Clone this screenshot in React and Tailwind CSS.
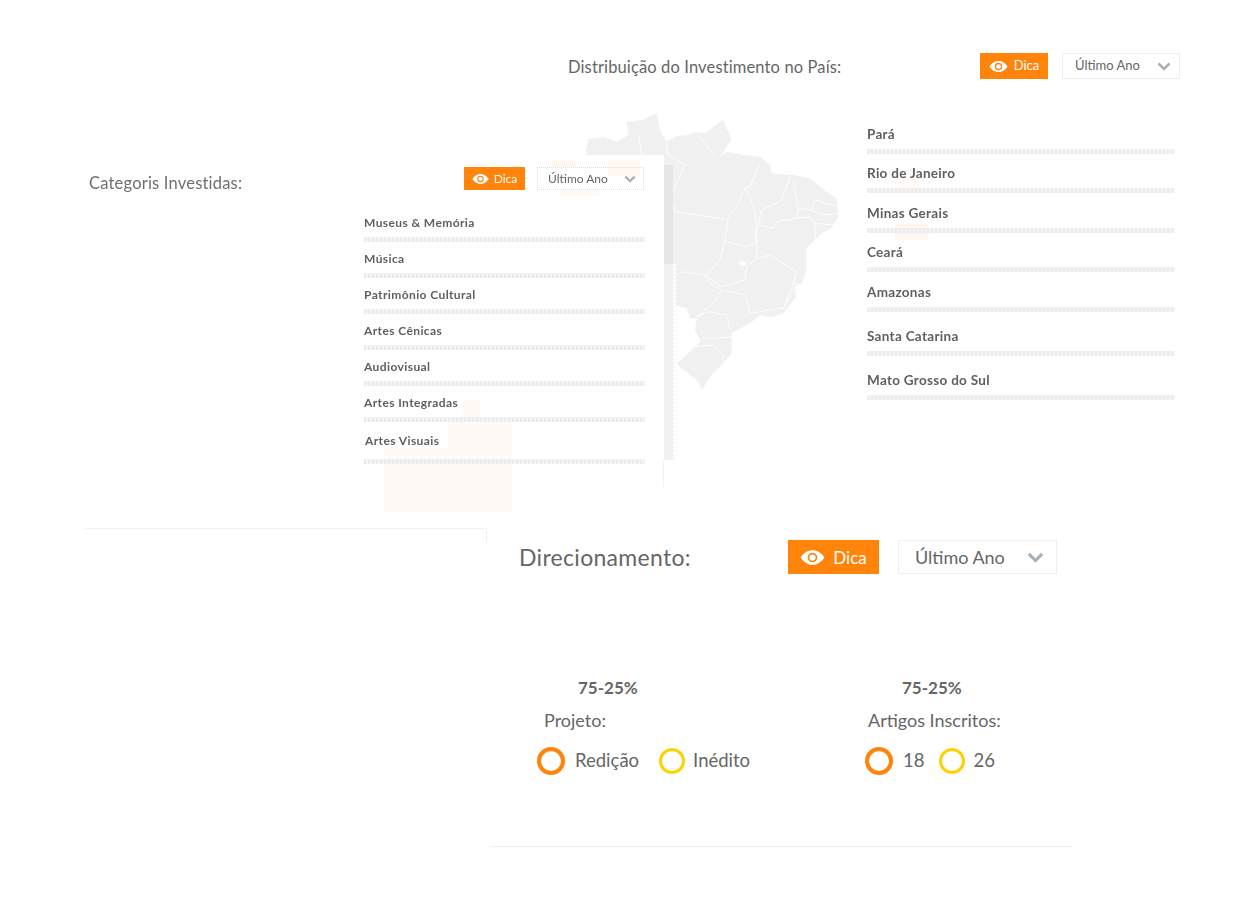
import React from 'react';

const STATES = [
  { name: 'Pará', mt: 'mt-[46px]' },
  { name: 'Rio de Janeiro', mt: 'mt-[10px]' },
  { name: 'Minas Gerais', mt: 'mt-[11px]' },
  { name: 'Ceará', mt: 'mt-[10px]' },
  { name: 'Amazonas', mt: 'mt-[11px]' },
  { name: 'Santa Catarina', mt: 'mt-[15px]' },
  { name: 'Mato Grosso do Sul', mt: 'mt-[15px]' },
];

const CATEGORIES = [
  { name: 'Museus & Memória', gap: 'mb-[8px]' },
  { name: 'Música', gap: 'mb-[8px]' },
  { name: 'Patrimônio Cultural', gap: 'mb-[8px]' },
  { name: 'Artes Cênicas', gap: 'mb-[8px]' },
  { name: 'Audiovisual', gap: 'mb-[8px]' },
  { name: 'Artes Integradas', gap: 'mb-[10px]' },
  { name: 'Artes Visuais', gap: 'mb-0', last: true },
];

const Eye = ({ className }) => (
  <svg viewBox="0 0 24 16" className={className}>
    <path d="M0.500 8C4 3 7.500 1 12 1s8 2 11.500 7C20 13 16.500 15 12 15S4 13 0.500 8z" fill="#fff" />
    <circle cx="12" cy="8" r="4.600" fill="#ff8409" />
    <circle cx="12" cy="8" r="3" fill="#fff" />
  </svg>
);

const Chevron = ({ className }) => (
  <svg viewBox="0 0 14 9" className={className} fill="none">
    <path d="M1.500 1.500 7 7l5.500-5.500" stroke="#a8b0b6" strokeWidth="2.600" />
  </svg>
);

const Bar = ({ className }) => (
  <div className={`h-[5px] bg-[repeating-linear-gradient(90deg,#ebebeb_0_2px,#f4f4f4_2px_4px)] ${className}`} />
);

const BrazilMap = () => (
  <svg viewBox="0 0 810 900" className="w-[270px] h-[300px] -mt-[12px] -ml-[5px] block">
    <defs>
      <pattern id="dots" width="6" height="6" patternUnits="userSpaceOnUse">
        <rect width="6" height="6" fill="#f3f3f3" />
        <rect width="3" height="3" fill="#eeeeee" />
        <rect x="3" y="3" width="3" height="3" fill="#eeeeee" />
      </pattern>
    </defs>
    <path
      fill="url(#dots)"
      d="M18 150 25 118 70 112 110 125 145 105 140 65 185 60 230 40 240 90 258 125 290 108 325 105 345 95 375 100 428 60 455 118 420 170 440 155 490 165 540 170 570 195 575 220 640 225 690 235 740 275 770 295 775 350 755 385 725 400 705 420 680 445 680 510 665 550 645 560 648 590 610 640 575 652 540 645 510 670 455 700 455 760 430 790 395 825 365 870 355 845 290 792 345 740 362 725 345 690 350 655 330 655 320 625 280 615 285 520 100 500 100 200 18 165Z"
    />
    <g fill="none" stroke="#fff" strokeWidth="2.500">
      <path d="M175 105 185 165" />
      <path d="M345 95 375 130 405 170" />
      <path d="M258 125 265 165 315 195 270 290 285 335 440 358" />
      <path d="M540 190 510 260 495 265 470 320 445 350 435 420 420 480 375 530 385 545 425 570" />
      <path d="M495 265 510 290 525 340 530 375 525 430 495 440 435 425" />
      <path d="M630 230 605 300 545 330 535 375 580 385 590 365 650 355 655 330 640 240" />
      <path d="M655 325 695 330 705 300 770 318" />
      <path d="M695 330 730 345 775 340" />
      <path d="M650 355 690 350 705 370 760 375" />
      <path d="M705 370 705 420" />
      <path d="M530 375 530 475 570 465 650 515 640 550 665 555" />
      <path d="M530 475 500 500 495 540 425 560 375 525" />
      <path d="M375 525 335 520 310 515 285 525" />
      <path d="M425 570 470 580 495 585 510 640 570 630 610 625 645 560" />
      <path d="M425 570 400 610 350 650 385 635 440 645 450 690" />
      <path d="M640 550 610 625" />
      <path d="M362 715 410 715 455 710" />
      <path d="M345 740 400 735 430 765 430 790" />
    </g>
    <rect x="478" y="485" width="20" height="12" fill="#fff" />
  </svg>
);

const Legend = ({ title, left, right, rightGap, labelClass }) => (
  <div>
    <div className={`text-[17px] font-bold text-[#666] leading-[24px] ${labelClass.pct}`}>75-25%</div>
    <div className={`mt-[8px] text-[18px] text-[#666] leading-[24px] ${labelClass.title}`}>{title}</div>
    <div className="mt-[15px] flex items-center">
      <span className="w-[28px] h-[28px] rounded-full border-[4px] border-[#ff8409]" />
      <span className={`text-[18.500px] text-[#666] ${labelClass.left}`}>{left}</span>
      <span className={`w-[26px] h-[26px] rounded-full border-[3px] border-[#ffd105] ${rightGap}`} />
      <span className="ml-[8px] text-[18.500px] text-[#666]">{right}</span>
    </div>
  </div>
);

export default function App() {
  return (
    <div className="relative w-[1234px] h-[900px] bg-white overflow-hidden font-['Lato',sans-serif] text-[#666]">
      {/* Distribuição */}
      <section className="relative h-[528px] pt-[53px] pl-[568px]">
        <div className="absolute left-[900px] top-[178px] w-[19px] h-[12px] bg-[#fffaf5]" />
        <div className="absolute left-[895px] top-[224px] w-[33px] h-[16px] bg-[#fff8f0]" />
        <div className="flex items-center h-[26px] w-[612px]">
          <h2 className="pt-[3px] text-[16.500px] tracking-[0.13px]">Distribuição do Investimento no País:</h2>
          <div className="ml-auto flex gap-[14px]">
            <button className="w-[68px] h-[26px] bg-[#ff8409] text-white text-[13px] flex items-center justify-center gap-[6px]">
              <Eye className="w-[19px] h-[13px]" />
              Dica
            </button>
            <button className="w-[118px] h-[26px] border border-[#eeeeee] text-[13px] flex items-center justify-between pl-[12px] pr-[8px]">
              Último Ano
              <Chevron className="w-[14px] h-[9px]" />
            </button>
          </div>
        </div>
        <div className="flex">
          <div className="w-[299px] pt-[33px] pl-[17px]">
            <BrazilMap />
          </div>
          <ul className="relative w-[308px] blur-[0.3px]">
            {STATES.map(s => (
              <li key={s.name} className={s.mt}>
                <div className="text-[13.500px] tracking-[0.3px] font-bold leading-[18px] text-[#5f5f5f]">{s.name}</div>
                <Bar className="mt-[6px]" />
              </li>
            ))}
          </ul>
        </div>
      </section>

      {/* Categorias, painel sobre o mapa */}
      <section className="absolute left-[80px] top-[155px] w-[584px] h-[305px] bg-white">
        <div className="absolute -right-[9px] top-[10px] w-[9px] h-[99px] bg-[#e6e6e6]" />
        <div className="absolute -right-[9px] top-[109px] w-[9px] h-[196px] bg-[#f1f1f1]" />
        <div className="absolute -right-[12px] top-[109px] w-[3px] h-[196px] bg-[repeating-linear-gradient(0deg,#f8f8f8_0_2px,#ffffff_2px_4px)]" />
        <div className="absolute right-0 top-[305px] h-[27px] border-r border-[#f1f1f1]" />
        <div className="absolute left-[472px] top-[5px] w-[24px] h-[7px] bg-[#fff8f0]" />
        <div className="absolute left-[528px] top-[5px] w-[32px] h-[16px] bg-[#fff8f0]" />
        <div className="absolute left-[480px] top-[35px] w-[40px] h-[6px] bg-[#fffaf5]" />
        <div className="absolute left-[383px] top-[245px] w-[17px] h-[17px] bg-[#fffaf5]" />
        <div className="absolute left-[368px] top-[262px] w-[64px] h-[31px] bg-[#fffaf5]" />
        <div className="absolute left-[304px] top-[293px] w-[128px] h-[64px] bg-[#fffaf5]" />
        <div className="relative blur-[0.4px]">
          <div className="flex items-center h-[23px] pt-[12px] box-content w-[555px] pl-[9px]">
            <h2 className="pt-[9px] text-[16.500px] tracking-[0.2px] text-[#6f6f6f]">Categoris Investidas:</h2>
            <div className="ml-auto flex gap-[12px]">
              <button className="w-[61px] h-[23px] bg-[#ff8409] text-white text-[12px] flex items-center justify-center gap-[5px]">
                <Eye className="w-[17px] h-[12px]" />
                Dica
              </button>
              <button className="w-[107px] h-[23px] border border-dotted border-[#dddddd] text-[12px] flex items-center justify-between pl-[10px] pr-[7px]">
                Último Ano
                <Chevron className="w-[12px] h-[8px]" />
              </button>
            </div>
          </div>
          <ul className="ml-[284px] w-[281px] mt-[24px]">
            {CATEGORIES.map(c => (
              <li key={c.name} className={c.gap}>
                <div className={`text-[12px] tracking-[0.4px] font-bold leading-[18px] text-[#5f5f5f] ${c.last ? 'pl-px' : ''}`}>{c.name}</div>
                <Bar className={c.last ? 'mt-[9px]' : 'mt-[5px]'} />
              </li>
            ))}
          </ul>
        </div>
      </section>

      <div className="relative">
        <div className="ml-[85px] w-[402px] h-[14px] border-t border-r border-[#f2f2f2]" />
      </div>

      {/* Direcionamento */}
      <section className="relative ml-[491px] w-[582px] h-[319px] -mt-[14px] border-b border-[#eeeeee]">
        <div className="flex items-center pt-[12px] pl-[28px]">
          <h2 className="text-[23px] tracking-[0.3px] w-[269px]">Direcionamento:</h2>
          <button className="w-[91px] h-[34px] bg-[#ff8409] text-white text-[17px] flex items-center justify-center gap-[8px]">
            <Eye className="w-[25px] h-[17px]" />
            Dica
          </button>
          <button className="ml-[19px] w-[159px] h-[34px] border border-[#eeeeee] text-[18px] flex items-center justify-between pl-[16px] pr-[12px]">
            Último Ano
            <Chevron className="w-[17px] h-[11px]" />
          </button>
        </div>
        <div className="flex mt-[101px]">
          <div className="ml-[46px] w-[328px]">
            <Legend
              title="Projeto:"
              left="Redição"
              right="Inédito"
              rightGap="ml-[20px]"
              labelClass={{ pct: 'pl-[41px]', title: 'pl-[7px]', left: 'ml-[10px]' }}
            />
          </div>
          <Legend
            title="Artigos Inscritos:"
            left="18"
            right="26"
            rightGap="ml-[15px]"
            labelClass={{ pct: 'pl-[37px]', title: 'pl-[3px]', left: 'ml-[10px]' }}
          />
        </div>
      </section>
    </div>
  );
}
